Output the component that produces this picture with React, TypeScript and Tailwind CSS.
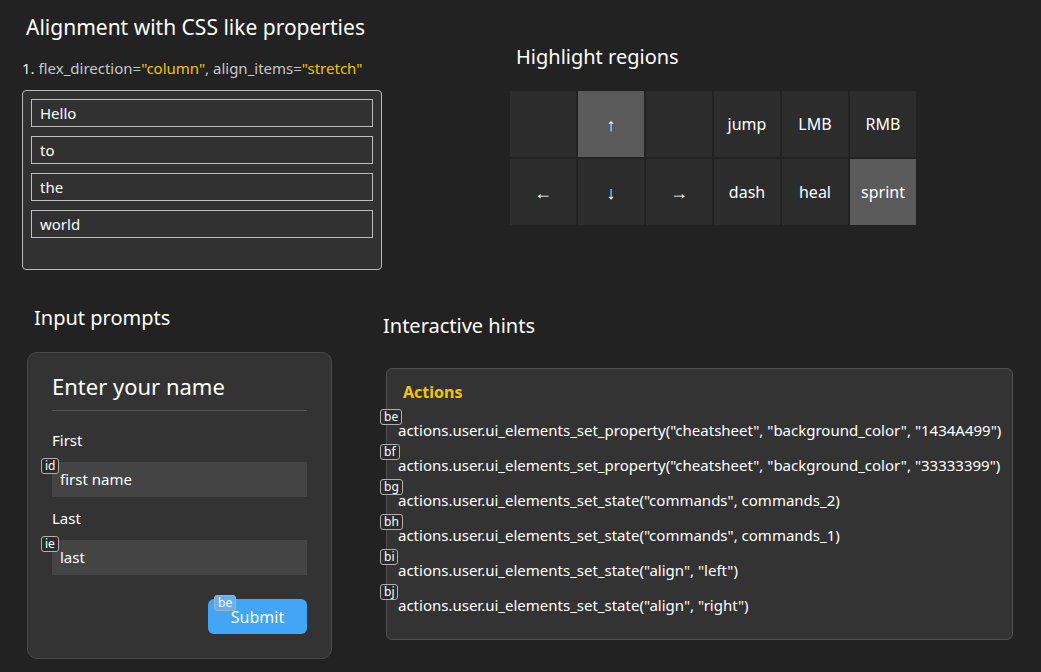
import React from "react";

const Badge = ({ label, className = "" }: { label: string; className?: string }) => (
  <span
    className={
      "absolute flex h-[16px] items-center justify-center rounded-[3px] border border-[#b0b0b0] bg-[#2b2b2b] px-[3px] text-[12px] leading-none text-white " +
      className
    }
  >
    {label}
  </span>
);

const keys: { label: string; hl?: boolean }[] = [
  { label: "" },
  { label: "↑", hl: true },
  { label: "" },
  { label: "jump" },
  { label: "LMB" },
  { label: "RMB" },
  { label: "←" },
  { label: "↓" },
  { label: "→" },
  { label: "dash" },
  { label: "heal" },
  { label: "sprint", hl: true },
];

const hints = [
  { b: "be", t: 'actions.user.ui_elements_set_property("cheatsheet", "background_color", "1434A499")' },
  { b: "bf", t: 'actions.user.ui_elements_set_property("cheatsheet", "background_color", "33333399")' },
  { b: "bg", t: 'actions.user.ui_elements_set_state("commands", commands_2)' },
  { b: "bh", t: 'actions.user.ui_elements_set_state("commands", commands_1)' },
  { b: "bi", t: 'actions.user.ui_elements_set_state("align", "left")' },
  { b: "bj", t: 'actions.user.ui_elements_set_state("align", "right")' },
];

export default function App() {
  return (
    <div
      className="h-[672px] w-[1041px] overflow-hidden bg-[#222222] text-white"
      style={{ fontFamily: '"Noto Sans", "Open Sans", sans-serif' }}
    >
      {/* top row */}
      <div className="flex">
        <div className="ml-[22px] w-[360px]">
          <div className="ml-[4px] mt-[13px] whitespace-nowrap text-[21px] leading-[28px]">
            Alignment with CSS like properties
          </div>
          <div className="mt-[17px] whitespace-nowrap text-[15px] leading-[20px] text-[#c8c8c8]">
            <span className="text-[#e8e8e8]">1.</span> flex_direction=
            <span className="text-[#f2c200]">"column"</span>, align_items=
            <span className="text-[#f2c200]">"stretch"</span>
          </div>
          <div className="mt-[12px] flex h-[180px] flex-col gap-[9px] rounded-[4px] border border-[#b8b8b8] bg-[#313131] p-[8px]">
            {["Hello", "to", "the", "world"].map((w) => (
              <div
                key={w}
                className="flex h-[28px] items-center border border-[#bdbdbd] px-[8px] text-[15px] text-white"
              >
                {w}
              </div>
            ))}
          </div>
        </div>
        <div className="ml-[128px]">
          <div className="ml-[6px] mt-[43px] text-[20px] leading-[28px]">Highlight regions</div>
          <div className="mt-[20px] grid grid-cols-[repeat(6,66px)] grid-rows-[66px_66px] gap-[2px]">
            {keys.map((k, i) => (
              <div
                key={i}
                className={
                  "flex items-center justify-center " +
                  (k.label.length === 1 ? "text-[18px] " : "text-[16px] ") +
                  (k.hl ? "bg-[#5a5a5a]" : "bg-[#2c2c2c]")
                }
              >
                {k.label}
              </div>
            ))}
          </div>
        </div>
      </div>

      {/* bottom row */}
      <div className="mt-[34px] flex">
        <div className="ml-[27px] w-[305px]">
          <div className="ml-[7px] text-[20px] leading-[28px]">Input prompts</div>
          <div className="mt-[20px] h-[307px] rounded-[10px] border border-[#4a4a4a] bg-[#333333] px-[24px] pt-[17px]">
            <div className="text-[22px] leading-[32px]">Enter your name</div>
            <div className="mt-[8px] h-px bg-[#555555]" />
            <div className="mt-[19px] text-[15px] leading-[20px]">First</div>
            <div className="relative mt-[12px] flex h-[35px] items-center bg-[#444444] px-[8px] text-[15px]">
              first name
              <Badge label="id" className="-left-[11px] -top-[4px]" />
            </div>
            <div className="mt-[11px] text-[15px] leading-[20px]">Last</div>
            <div className="relative mt-[12px] flex h-[35px] items-center bg-[#444444] px-[8px] text-[15px]">
              last
              <Badge label="ie" className="-left-[11px] -top-[4px]" />
            </div>
            <div className="mt-[24px] flex justify-end">
              <div className="relative flex h-[35px] w-[99px] items-center justify-center rounded-[6px] bg-[#42a5f5] text-[16px]">
                Submit
                <Badge label="be" className="left-[6px] -top-[4px] border-[#9fd0fa] bg-[#5fb2f5]" />
              </div>
            </div>
          </div>
        </div>
        <div className="ml-[54px]">
          <div className="ml-[-3px] mt-[8px] text-[20px] leading-[28px]">Interactive hints</div>
          <div className="mt-[28px] h-[272px] w-[627px] rounded-[6px] border border-[#4f4f4f] bg-[#333333] pl-[11px] pt-[11px]">
            <div className="ml-[5px] text-[16px] font-bold leading-[24px] text-[#f5c400]">Actions</div>
            <div className="mt-[9px] flex flex-col">
              {hints.map((h) => (
                <div key={h.b} className="relative flex h-[35px] items-center whitespace-nowrap text-[15px]">
                  {h.t}
                  <Badge label={h.b} className="-left-[18px] -top-[4px]" />
                </div>
              ))}
            </div>
          </div>
        </div>
      </div>
    </div>
  );
}
